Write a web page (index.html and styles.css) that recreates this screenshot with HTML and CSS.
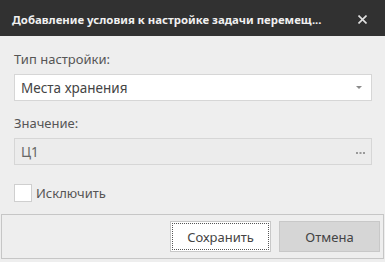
FILE: index.html
```html
<!DOCTYPE html>
<html lang="ru">
<head>
<meta charset="utf-8">
<link rel="stylesheet" href="styles.css">
</head>
<body>
<div class="dialog">
  <div class="titlebar">
    <span class="title">Добавление условия к настройке задачи перемещ...</span>
    <svg class="close" width="9" height="9" viewBox="0 0 9 9"><path d="M0.5 0.5L8.5 8.5M8.5 0.5L0.5 8.5" stroke="#e0e0e0" stroke-width="1.6"/></svg>
  </div>
  <div class="content">
    <div class="label">Тип настройки:</div>
    <div class="field select">
      <span>Места хранения</span>
      <svg class="arrow" width="6" height="3" viewBox="0 0 6 3"><path d="M0 0H6L3 3Z" fill="#8a8a8a"/></svg>
    </div>
    <div class="label second">Значение:</div>
    <div class="field disabled">
      <span>Ц1</span>
      <svg class="dots" width="9" height="2" viewBox="0 0 9 2"><rect x="0" y="0" width="2" height="2" fill="#999"/><rect x="3.5" y="0" width="2" height="2" fill="#999"/><rect x="7" y="0" width="2" height="2" fill="#999"/></svg>
    </div>
    <label class="check">
      <span class="box"></span>
      <span>Исключить</span>
    </label>
  </div>
  <div class="footer">
    <button class="btn primary">Сохранить</button>
    <button class="btn cancel">Отмена</button>
  </div>
</div>
</body>
</html>
```
FILE: styles.css
```css
html, body {
  margin: 0;
  padding: 0;
  background: #eeeeee;
}
body {
  font-family: "Noto Sans", "Open Sans", sans-serif;
  color: #333;
}
.dialog {
  width: 385px;
  height: 262px;
  display: flex;
  flex-direction: column;
}
.titlebar {
  height: 36px;
  flex: none;
  background: #313131;
  display: flex;
  align-items: center;
  justify-content: space-between;
  padding: 0 18px 0 12px;
  box-sizing: border-box;
}
.title {
  color: #f0f0f0;
  font-weight: 700;
  font-size: 11.4px;
  white-space: nowrap;
  position: relative;
  top: 1px;
}
.close {
  display: block;
  flex: none;
  position: relative;
  top: 1px;
}
.content {
  padding: 14px 13px 0 14px;
  display: flex;
  flex-direction: column;
  height: 178px;
  flex: none;
  box-sizing: border-box;
}
.label {
  font-size: 13px;
  line-height: 18px;
  color: #555;
  height: 24px;
}
.label.second {
  margin-top: 13px;
}
.field {
  height: 27px;
  box-sizing: border-box;
  border: 1px solid #d6d6d6;
  display: flex;
  align-items: center;
  justify-content: space-between;
  padding: 0 6px 0 6px;
  font-size: 13.5px;
  color: #444;
}
.select {
  background: #ffffff;
}
.arrow {
  display: block;
  margin-right: 3px;
}
.disabled {
  background: #ececec;
  color: #666;
}
.dots {
  display: block;
  position: relative;
  top: 1px;
}
.check {
  margin-top: 19px;
  display: flex;
  align-items: center;
  font-size: 13px;
  color: #555;
  gap: 4px;
}
.box {
  width: 16px;
  height: 16px;
  background: #fff;
  border: 1px solid #cfcfcf;
}
.footer {
  margin: 0 1px;
  height: 45px;
  flex: none;
  box-sizing: border-box;
  border: 1px solid #c6c6c6;
  display: flex;
  justify-content: flex-end;
  align-items: center;
  gap: 8px;
  padding: 0 3px 0 0;
}
.btn {
  width: 101px;
  height: 31px;
  font-family: inherit;
  font-size: 13px;
  color: #444;
  box-sizing: border-box;
  margin: 0;
}
.primary {
  background: #fff;
  border: 1px solid #c8c8c8;
  outline: 1px dotted #555;
  outline-offset: -3px;
}
.cancel {
  background: #d6d6d6;
  border: 1px solid #c8c8c8;
}
```
